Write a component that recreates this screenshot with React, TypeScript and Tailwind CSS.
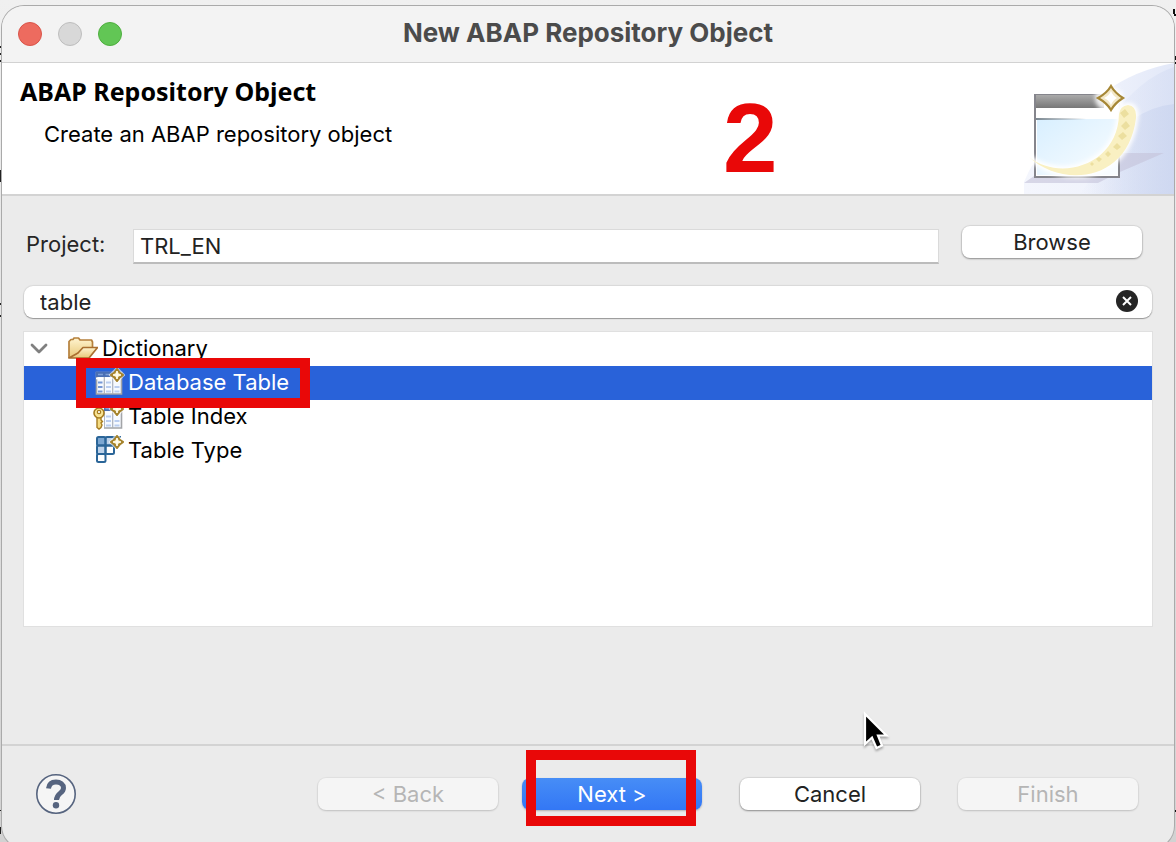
import React, { useState } from "react";

function Sparkle({ x, y }: { x: number; y: number }) {
  return (
    <g transform={`translate(${x} ${y})`}>
      <path d="M0-8.500 8.500 0 0 8.500-8.500 0Z" fill="#fff" opacity=".6" />
      <path d="M0-6Q2-2 6 0 2 2 0 6-2 2-6 0-2-2 0-6Z" fill="#f3e3a8" stroke="#a5832c" strokeWidth="2" strokeLinejoin="round" />
      <path d="M0-4V4M-4 0H4" stroke="#fffdf0" strokeWidth="1.6" />
    </g>
  );
}

function FolderIcon() {
  return (
    <svg width="32" height="26" viewBox="0 0 32 26" aria-hidden="true" className="shrink-0">
      <defs>
        <linearGradient id="folder" x1="0" y1="0" x2="0" y2="1">
          <stop offset="0" stopColor="#fff4cf" />
          <stop offset="1" stopColor="#e8c878" />
        </linearGradient>
      </defs>
      <path d="M3 23V6.500L5 4.500H7L8 3H12.500L14 5H25.500L26.500 7V13" fill="url(#folder)" stroke="#b5803c" strokeWidth="1.700" strokeLinejoin="round" />
      <path d="M3 23 12 18 17 12.500H31.500L23 23Z" fill="url(#folder)" stroke="#a96f30" strokeWidth="1.700" strokeLinejoin="round" />
    </svg>
  );
}

function Grid() {
  return (
    <>
      <path d="M3.500 5.500H28.500V27H3.500Z" fill="#f6faff" stroke="#a3a5a8" strokeWidth="1.6" />
      <path d="M3 5H20V10H3Z" fill="#4a6fb4" />
      <path d="M5 7.500H10M12.500 7.500H17" stroke="#7f9fd6" strokeWidth="1.600" />
      <path d="M3 11.500H28" stroke="#fff" strokeWidth="1.600" />
      <path d="M5 15.500H9.500M5 20H9.500M5 24.500H9.500" stroke="#7698d6" strokeWidth="1.800" />
      <path d="M13 15.500H18M13 20H18M13 24.500H18M21.500 20H26.500M21.500 24.500H26.500" stroke="#b9cdf0" strokeWidth="1.800" />
      <path d="M11.300 10V27M19.700 10V27" stroke="#a9b0bb" strokeWidth="1.200" />
    </>
  );
}

function TableIcon() {
  return (
    <svg width="32" height="30" viewBox="0 0 32 30" aria-hidden="true" className="shrink-0">
      <Grid />
      <Sparkle x={24} y={8} />
    </svg>
  );
}

function IndexIcon() {
  return (
    <svg width="32" height="30" viewBox="0 0 32 30" aria-hidden="true" className="shrink-0">
      <Grid />
      <Sparkle x={24} y={8} />
      <path d="M0 6H11V28H0Z" fill="#fff" />
      <path d="M4 16H8V19L9.500 20.500 8 22 9 24 8 26.500 6 28 4 26.500Z" fill="#f5dc83" stroke="#a67c20" strokeWidth="1.400" />
      <circle cx="6" cy="12" r="5" fill="#f7e394" stroke="#a67c20" strokeWidth="1.600" />
      <circle cx="6" cy="11" r="1.700" fill="#fff" stroke="#a67c20" strokeWidth="1.200" />
    </svg>
  );
}

function TypeIcon() {
  return (
    <svg width="32" height="30" viewBox="0 0 32 30" aria-hidden="true" className="shrink-0">
      <path d="M4 2H28V10H21V18.500H12.500V27H4Z" fill="#fff" />
      <path d="M4 2H12V10H4Z" fill="#7ba6d1" />
      <path d="M12 2H20V10H12ZM4 10H12V18H4Z" fill="#bdd2ea" />
      <g fill="none" stroke="#2a6598" strokeWidth="2">
        <rect x="4" y="2" width="8.500" height="8.500" rx="1.500" />
        <rect x="12.500" y="2" width="8.500" height="8.500" rx="1.500" />
        <rect x="4" y="10.500" width="8.500" height="8.500" rx="1.500" />
        <rect x="12.500" y="10.500" width="8.500" height="8.500" rx="1.500" />
        <rect x="4" y="19" width="8.500" height="8" rx="1.500" />
        <path d="M21 2H28" />
      </g>
      <Sparkle x={24} y={7} />
    </svg>
  );
}

function WizardBanner() {
  return (
    <svg width="150" height="131" viewBox="1024 63 150 131" aria-hidden="true" className="block shrink-0">
      <defs>
        <linearGradient id="sky" x1="0" x2="1"><stop offset="0" stopColor="#f4f6fd" /><stop offset=".5" stopColor="#f0f3fc" /><stop offset="1" stopColor="#e2e8f8" /></linearGradient>
        <linearGradient id="dusk" x1="0" x2="1"><stop offset="0" stopColor="#ccd6f0" stopOpacity="0" /><stop offset="1" stopColor="#ccd6f0" /></linearGradient>
        <linearGradient id="bar" x1="0" y1="0" x2="0" y2="1"><stop offset="0" stopColor="#aaa" /><stop offset="1" stopColor="#777" /></linearGradient>
        <linearGradient id="pane" x1="0" y1="0" x2="1" y2="1"><stop offset="0" stopColor="#d8efff" /><stop offset="1" stopColor="#fafdff" /></linearGradient>
        <linearGradient id="frame" gradientUnits="userSpaceOnUse" x1="1036" x2="1086" y1="0" y2="0"><stop offset="0" stopColor="#7b8790" /><stop offset="1" stopColor="#7b8790" stopOpacity="0" /></linearGradient>
        <filter id="soft" x="-30%" y="-30%" width="160%" height="160%"><feGaussianBlur stdDeviation="2" /></filter>
        <filter id="faint"><feGaussianBlur stdDeviation=".6" /></filter>
      </defs>
      <path d="M1174 63Q1135 70 1105 92 1040 140 1024 182V194H1174Z" fill="url(#sky)" />
      <path d="M1174 67Q1140 78 1110 120L1090 194H1174Z" fill="url(#dusk)" opacity=".4" />
      <path d="M1174 104Q1152 106 1132 120L1080 194H1174Z" fill="url(#dusk)" opacity=".8" />
      <path d="M1120 153H1164L1120 172 1098 183H1024L1034 176H1120Z" fill="#c5c3da" opacity=".6" filter="url(#faint)" />
      <path d="M1035 95H1119V177H1035Z" fill="#fff" stroke="#85858c" strokeWidth="2" />
      <path d="M1108 92H1122V150H1108Z" fill="#fff" filter="url(#soft)" />
      <path d="M1036 95H1104V108H1036Z" fill="url(#bar)" />
      <path d="M1037 119H1118V175H1037Z" fill="url(#pane)" />
      <path d="M1036 118H1086V120H1036Z" fill="url(#frame)" />
      <path d="M1029 157C1060 187 1128 184 1136 118Q1137 106 1128 105 1120 106 1119 114C1118 165 1060 182 1029 157Z" fill="#fff" stroke="#fff" strokeWidth="5" filter="url(#soft)" />
      <path d="M1029 157C1060 187 1128 184 1136 118Q1137 106 1128 105 1120 106 1119 114C1118 165 1060 182 1029 157Z" fill="#f9f0c2" filter="url(#faint)" />
      <path d="m1125 109 4 5-5 4-4-5ZM1126 121l4 5-5 4-4-4ZM1123 132l4 4-5 4-4-4ZM1117 143l4 4-4 3-4-3ZM1108 151l3 3-3 3-3-3ZM1099 157l3 2-3 3-3-3ZM1092 162l2 2-2 2-2-2Z" fill="#ecdf9f" />
      <circle cx="1108" cy="98" r="13" fill="#fff" opacity=".85" filter="url(#soft)" />
      <path d="M1111 86Q1115 93 1123 98 1115 103 1111 110 1107 103 1098 98 1107 93 1111 86Z" fill="#f3e8c8" stroke="#a68736" strokeWidth="2.200" />
      <path d="M1111 91Q1113 96 1117 98 1113 100 1111 105 1109 100 1104 98 1109 96 1111 91Z" fill="#fff" />
    </svg>
  );
}

const items = [
  { name: "Database Table", Icon: TableIcon },
  { name: "Table Index", Icon: IndexIcon },
  { name: "Table Type", Icon: TypeIcon },
];

const buttonBase = "h-8 w-[180px] rounded-lg text-[22px] leading-8";
const raised = "bg-white text-[#222] shadow-[0_0_1px_1px_rgba(0,0,0,0.08),0_1px_2px_rgba(0,0,0,0.35)]";
const muted = "bg-[#f5f5f5] text-[#b5b5b5] shadow-[0_0_1px_1px_rgba(0,0,0,0.04),0_1px_2px_rgba(0,0,0,0.15)]";

export default function App() {
  const [project, setProject] = useState("TRL_EN");
  const [query, setQuery] = useState("table");
  const [selected, setSelected] = useState("Database Table");

  return (
    <div className="relative flex h-screen min-h-[640px] flex-col overflow-hidden bg-[#dcdcdc] bg-linear-to-b from-[#f0f0f0] to-[#d2d2d2] px-[2px] pt-[6px] font-['Inter','Liberation_Sans',sans-serif] text-[22px] text-black">
      <svg width="2" height="842" viewBox="0 0 2 842" aria-hidden="true" className="pointer-events-none absolute top-0 left-0">
        <path d="M0 46H2V48H0ZM0 53H2V55H0ZM0 60H2V62H0ZM0 170H2V182H0ZM0 303H2V305H0ZM0 315H2V317H0ZM0 810H2V811H0ZM0 827H1V834H0Z" fill="#222" />
      </svg>
      <svg width="6" height="842" viewBox="0 0 6 842" aria-hidden="true" className="pointer-events-none absolute top-0 right-0">
        <path d="M3 9H5V14H3ZM4 14H6V16H4ZM4 56H6V60H4ZM4 62H6V64H4ZM4 810H6V812H4Z" fill="#111" />
      </svg>
      <main className="relative -mb-[6px] flex grow flex-col overflow-hidden rounded-[22px] bg-[#ebebeb] shadow-[0_0_0_1px_#aaa]">
        <div className="flex h-[57px] shrink-0 items-center border-b border-[#d2d2d2] bg-[#f3f3f3] px-4">
          <div className="flex flex-1 gap-4">
            <button aria-label="Close" className="size-6 rounded-full border border-[#d95449] bg-[#ed6b5f]" />
            <button aria-label="Minimize" disabled className="size-6 rounded-full border border-[#bdbdbd] bg-[#d8d8d8]" />
            <button aria-label="Zoom" className="size-6 rounded-full border border-[#4eae3e] bg-[#62c655]" />
          </div>
          <h1 className="pb-0.5 text-[26px] leading-8 font-bold text-[#4b4b4b]">New ABAP Repository Object</h1>
          <div className="flex-1" />
        </div>

        <header className="relative flex h-[133px] shrink-0 justify-between border-b-2 border-[#d3d3d3] bg-white">
          <div className="pt-3 pl-[18px]">
            <h2 className="font-['Noto_Sans',sans-serif] text-[25px] leading-8 font-bold">ABAP Repository Object</h2>
            <p className="mt-[13px] pl-6 text-[22px] leading-7">Create an ABAP repository object</p>
          </div>
          <WizardBanner />
          <span className="absolute top-[25px] left-[721px] font-['Liberation_Sans',sans-serif] text-[98px] leading-[100px] font-bold text-[#e90808]">2</span>
        </header>

        <section className="flex grow flex-col px-[22px] pt-[30px] pb-[118px]">
          <div className="flex items-start pr-[9px]">
            <label htmlFor="project" className="w-[109px] shrink-0 pt-0.5 pl-[2px] leading-8 text-[#262626]">Project:</label>
            <input id="project" value={project} onChange={(e) => setProject(e.target.value)} className="mt-[3px] h-[35px] min-w-0 grow border border-b-2 border-[#dadada] border-b-[#bcbcbc] bg-white px-1.5 text-[22px] text-[#222] outline-none" />
            <button className={`${buttonBase} ${raised} mr-px ml-[23px] shrink-0`}>Browse</button>
          </div>
          <div className="mt-[22px] flex h-8 shrink-0 items-center rounded-[9px] bg-white pr-[14px] pl-4 shadow-[0_0_1px_1px_rgba(0,0,0,0.08),0_1px_1px_rgba(0,0,0,0.3)]">
            <input aria-label="Filter" value={query} onChange={(e) => setQuery(e.target.value)} className="min-w-0 grow bg-transparent text-[22px] leading-8 text-[#222] outline-none" />
            <button aria-label="Clear filter" onClick={() => setQuery("")} className="pb-0.5">
              <svg width="22" height="22" viewBox="0 0 22 22" aria-hidden="true">
                <circle cx="11" cy="11" r="11" fill="#252525" />
                <path d="m7 7 8 8m0-8-8 8" stroke="#fff" strokeWidth="2" />
              </svg>
            </button>
          </div>
          <div role="tree" aria-label="Repository objects" className="mt-[14px] grow bg-white shadow-[0_0_0_1px_#e0e0e0]">
            <div role="treeitem" aria-expanded="true" className="flex h-[34px] items-center pb-0.5">
              <svg width="32" height="20" viewBox="0 0 32 20" aria-hidden="true"><path d="m8 7 7 7 7-7" fill="none" stroke="#808080" strokeWidth="2.800" strokeLinecap="round" strokeLinejoin="round" /></svg>
              <span className="flex items-center pl-[10px]"><FolderIcon /><span className="pl-1">Dictionary</span></span>
            </div>
            {items.map(({ name, Icon }) => (
              <div key={name} role="treeitem" aria-selected={selected === name} onClick={() => setSelected(name)} className={`flex h-[34px] items-center pb-0.5 pl-[69px] ${selected === name ? "bg-[#2962d9] text-white" : ""}`}>
                <span className="relative flex h-[30px] items-center">
                  <Icon />
                  <span className="pl-[3px]">{name}</span>
                  {name === "Database Table" && <span className="pointer-events-none absolute -top-[9px] -right-[21px] -bottom-[11px] -left-[17px] z-10 border-[10px] border-[#e90808]" />}
                </span>
              </div>
            ))}
          </div>
        </section>

        <footer className="relative flex h-[104px] shrink-0 items-start border-t-2 border-[#d3d3d3] pt-8 pr-9 pl-[34px]">
          <button aria-label="Help" className="-mt-1 size-10 shrink-0">
            <svg width="40" height="40" viewBox="0 0 40 40" aria-hidden="true">
              <circle cx="20" cy="20" r="19.200" fill="#f5f5f5" stroke="#56647f" strokeWidth="1.600" />
              <path d="M12.500 14.500C13 10 15.500 8 20 8 24.500 8 27.500 10.500 27.500 14 27.500 19.500 20.500 19 20.500 26" fill="none" stroke="#56647f" strokeWidth="5" />
              <circle cx="20" cy="31.200" r="3.200" fill="#56647f" />
            </svg>
          </button>
          <div className="flex grow justify-end">
            <button disabled className={`${buttonBase} ${muted}`}>&lt; Back</button>
            <span className="relative ml-6">
              <button className={`${buttonBase} bg-linear-to-b from-[#478df6] to-[#3377f5] text-white shadow-[0_1px_2px_rgba(0,0,0,0.25)]`}>Next &gt;</button>
              <span className="pointer-events-none absolute -top-7 left-1 h-[76px] w-[170px] border-[10px] border-[#e90808]" />
            </span>
            <button className={`${buttonBase} ${raised} ml-[38px]`}>Cancel</button>
            <button disabled className={`${buttonBase} ${muted} ml-[38px]`}>Finish</button>
          </div>
        </footer>
      </main>
      <svg width="28" height="42" viewBox="0 0 28 42" aria-hidden="true" className="pointer-events-none absolute top-[711px] left-[862px] drop-shadow-[0_2px_1px_rgba(0,0,0,0.3)]">
        <path d="M3 3V33L10 26.500 14.500 37 20 34.500 16 24.500H24.500Z" fill="#000" stroke="#fff" strokeWidth="2.200" />
      </svg>
    </div>
  );
}
